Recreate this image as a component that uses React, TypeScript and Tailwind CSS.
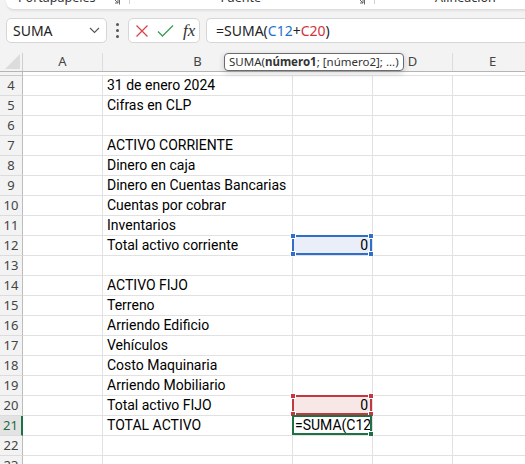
import React from 'react'

type Mark = 'blue' | 'red' | 'green'

type Row = {
  n: number
  b?: string
  c?: string
  mark?: Mark
}

const rows: Row[] = [
  { n: 4, b: '31 de enero 2024' },
  { n: 5, b: 'Cifras en CLP' },
  { n: 6 },
  { n: 7, b: 'ACTIVO CORRIENTE' },
  { n: 8, b: 'Dinero en caja' },
  { n: 9, b: 'Dinero en Cuentas Bancarias' },
  { n: 10, b: 'Cuentas por cobrar' },
  { n: 11, b: 'Inventarios' },
  { n: 12, b: 'Total activo corriente', c: '0', mark: 'blue' },
  { n: 13 },
  { n: 14, b: 'ACTIVO FIJO' },
  { n: 15, b: 'Terreno' },
  { n: 16, b: 'Arriendo Edificio' },
  { n: 17, b: 'Vehículos' },
  { n: 18, b: 'Costo Maquinaria' },
  { n: 19, b: 'Arriendo Mobiliario' },
  { n: 20, b: 'Total activo FIJO', c: '0', mark: 'red' },
  { n: 21, b: 'TOTAL ACTIVO', c: '=SUMA(C12', mark: 'green' },
  { n: 22 },
  { n: 23 },
]

const ui = { fontFamily: '"Noto Sans", "Open Sans", sans-serif' }
const cellFont = { fontFamily: 'Roboto, "Noto Sans", sans-serif' }

function Handle({ pos, color }: { pos: string; color: string }) {
  return <span className={`absolute w-[6px] h-[6px] border border-white ${pos} ${color}`} />
}

function RangeBox({ mark }: { mark: Mark }) {
  if (mark === 'blue')
    return (
      <div className="absolute -left-[1px] -top-[1px] right-0 bottom-0 border-2 border-[#2f6fcb]">
        <Handle pos="-left-[4px] -top-[4px]" color="bg-[#2f6fcb]" />
        <Handle pos="-right-[4px] -top-[4px]" color="bg-[#2f6fcb]" />
        <Handle pos="-left-[4px] -bottom-[4px]" color="bg-[#2f6fcb]" />
        <Handle pos="-right-[4px] -bottom-[4px]" color="bg-[#2f6fcb]" />
      </div>
    )
  if (mark === 'red')
    return (
      <div className="absolute -left-[1px] -top-[1px] right-0 bottom-0 border-2 border-[#c2383e]">
        <Handle pos="-left-[4px] -top-[4px]" color="bg-[#c2383e]" />
        <Handle pos="-right-[4px] -top-[4px]" color="bg-[#c2383e]" />
        <Handle pos="-left-[4px] -bottom-[4px]" color="bg-[#c2383e]" />
        <Handle pos="-right-[4px] -bottom-[4px]" color="bg-[#c2383e]" />
      </div>
    )
  return (
    <div className="absolute -left-[1px] -top-[1px] right-0 bottom-0 border-2 border-[#1e7145]">
      <span className="absolute -right-[4px] -bottom-[4px] w-[6px] h-[6px] bg-[#1e7145] border border-white" />
    </div>
  )
}

function GridRow({ row }: { row: Row }) {
  const active = row.n === 21
  const fill = row.mark === 'blue' ? 'bg-[#e9eef8]' : row.mark === 'red' ? 'bg-[#f8e7e7]' : 'bg-white'
  return (
    <div className="flex h-[20px]">
      <div
        className={`w-[23px] shrink-0 flex items-center justify-center text-[13px] border-b border-[#dcdcdc] ${
          active ? 'bg-[#e3e3e3] text-[#1e6b41] border-r-2 border-r-[#1e7145]' : 'bg-[#f3f3f3] text-[#444] border-r border-r-[#bdbdbd]'
        }`}
        style={ui}
      >
        {row.n}
      </div>
      <div className="w-[80px] shrink-0 bg-white border-r border-b border-[#e1e1e1]" />
      <div
        className="w-[190px] shrink-0 bg-white border-r border-b border-[#e1e1e1] pl-[4px] flex items-center text-[14px] text-black whitespace-nowrap overflow-hidden"
        style={cellFont}
      >
        {row.b}
      </div>
      <div
        className={`relative w-[80px] shrink-0 ${fill} border-r border-b border-[#e1e1e1] flex items-center text-[14px] text-black whitespace-nowrap ${
          row.mark === 'green' ? 'justify-start pl-[2px] text-[14.5px]' : 'justify-end pr-[4px]'
        }`}
        style={cellFont}
      >
        {row.c}
        {row.mark && <RangeBox mark={row.mark} />}
      </div>
      <div className="w-[80px] shrink-0 bg-white border-r border-b border-[#e1e1e1]" />
      <div className="w-[80px] shrink-0 bg-white border-r border-b border-[#e1e1e1]" />
    </div>
  )
}

function Launcher() {
  return (
    <svg width="9" height="9" viewBox="0 0 9 9" className="mt-[6px]">
      <path d="M0.5 0.5h8v8" fill="none" stroke="#666" />
      <path d="M3 3l4 4M4 7h3V4" fill="none" stroke="#666" />
    </svg>
  )
}

export default function App() {
  return (
    <div className="relative w-[525px] h-[464px] overflow-hidden bg-[#f3f3f3]" style={ui}>
      {/* ribbon bottom edge */}
      <div className="ml-[6px] w-[530px] h-[10px] bg-white rounded-b-[8px] border-b border-[#dedede] shadow-[0_1px_2px_rgba(0,0,0,0.08)] overflow-hidden">
        <div className="flex items-start -mt-[10px] text-[12.5px] leading-[16px] text-[#333]">
          <span className="ml-[12px]">Portapapeles</span>
          <span className="ml-[15px]"><Launcher /></span>
          <span className="ml-[9px] mt-[4px] w-px h-[10px] bg-[#d0d0d0]" />
          <span className="ml-[91px]">Fuente</span>
          <span className="ml-[95px]"><Launcher /></span>
          <span className="ml-[9px] mt-[4px] w-px h-[10px] bg-[#d0d0d0]" />
          <span className="ml-[60px]">Alineación</span>
        </div>
      </div>

      {/* formula bar */}
      <div className="flex items-center h-[25px] mt-[8px]">
        <div className="ml-[6px] w-[101px] h-[25px] bg-white border border-[#d6d6d6] rounded-[5px] flex items-center pl-[6px] pr-[6px]">
          <span className="text-[14px] text-[#222]">SUMA</span>
          <svg width="11" height="7" viewBox="0 0 11 7" className="ml-auto">
            <path d="M1 1l4.5 4.5L10 1" fill="none" stroke="#555" strokeWidth="1.1" />
          </svg>
        </div>
        <div className="w-[21px] flex flex-col items-center gap-[3px]">
          <span className="w-[3px] h-[3px] rounded-full bg-[#555]" />
          <span className="w-[3px] h-[3px] rounded-full bg-[#555]" />
          <span className="w-[3px] h-[3px] rounded-full bg-[#555]" />
        </div>
        <div className="w-[72px] h-[25px] bg-white border border-[#d6d6d6] rounded-[5px] flex items-center pl-[6px]">
          <svg width="14" height="14" viewBox="0 0 14 14">
            <path d="M1.5 1.5l11 11M12.5 1.5l-11 11" stroke="#d9434b" strokeWidth="1.3" />
          </svg>
          <svg width="17" height="14" viewBox="0 0 17 14" className="ml-[8px]">
            <path d="M1 7.5l4.5 4.5L16 1.5" fill="none" stroke="#3a9e56" strokeWidth="1.3" />
          </svg>
          <span
            className="ml-[9px] text-[17px] italic text-[#333] leading-none"
            style={{ fontFamily: '"Liberation Serif", "DejaVu Serif", serif' }}
          >
            fx
          </span>
        </div>
        <div className="ml-[6px] flex-1 h-[25px] bg-white border border-[#d6d6d6] rounded-l-[5px] border-r-0 flex items-center pl-[9px] text-[14px] text-[#222]">
          <span>=SUMA(</span>
          <span className="text-[#1f6fd0]">C12</span>
          <span>+</span>
          <span className="text-[#d2323a]">C20</span>
          <span>)</span>
        </div>
      </div>

      {/* column headers (C label sits under the tooltip) */}
      <div className="flex mt-[10px] h-[19px] border-b border-[#b5b5b5] text-[13px] text-[#444]">
        <div className="w-[23px] shrink-0 relative border-r border-[#cfcfcf]">
          <svg width="15" height="15" viewBox="0 0 15 15" className="absolute right-[2px] bottom-[2px]">
            <path d="M15 0V15H0Z" fill="#dcdcdc" />
          </svg>
        </div>
        <div className="w-[80px] shrink-0 flex items-center justify-center border-r border-[#dcdcdc]">A</div>
        <div className="w-[190px] shrink-0 flex items-center justify-center border-r border-[#dcdcdc]">B</div>
        <div className="w-[80px] shrink-0 border-r border-[#dcdcdc] bg-[#e3e3e3]" />
        <div className="w-[80px] shrink-0 flex items-center justify-center border-r border-[#dcdcdc]">D</div>
        <div className="w-[80px] shrink-0 flex items-center justify-center border-r border-[#dcdcdc]">E</div>
      </div>
      {/* hidden rows 1-3 */}
      <div className="flex h-[4px]">
        <div className="w-[23px] shrink-0 bg-[#f3f3f3] border-r border-[#bdbdbd] border-b border-b-[#c8c8c8]" />
        <div className="flex-1 bg-white border-b border-[#e1e1e1]" />
      </div>

      {rows.map((r) => (
        <GridRow key={r.n} row={r} />
      ))}

      {/* function tooltip */}
      <div
        className="absolute left-[224px] top-[53px] h-[18px] px-[4px] flex items-center bg-white border border-[#6b6b6b] rounded-[4px] shadow-[0_2px_6px_rgba(0,0,0,0.18)] text-[11.5px] text-[#333] whitespace-nowrap"
        style={ui}
      >
        SUMA(<b className="font-bold">número1</b>; [número2]; ...)
      </div>
    </div>
  )
}
